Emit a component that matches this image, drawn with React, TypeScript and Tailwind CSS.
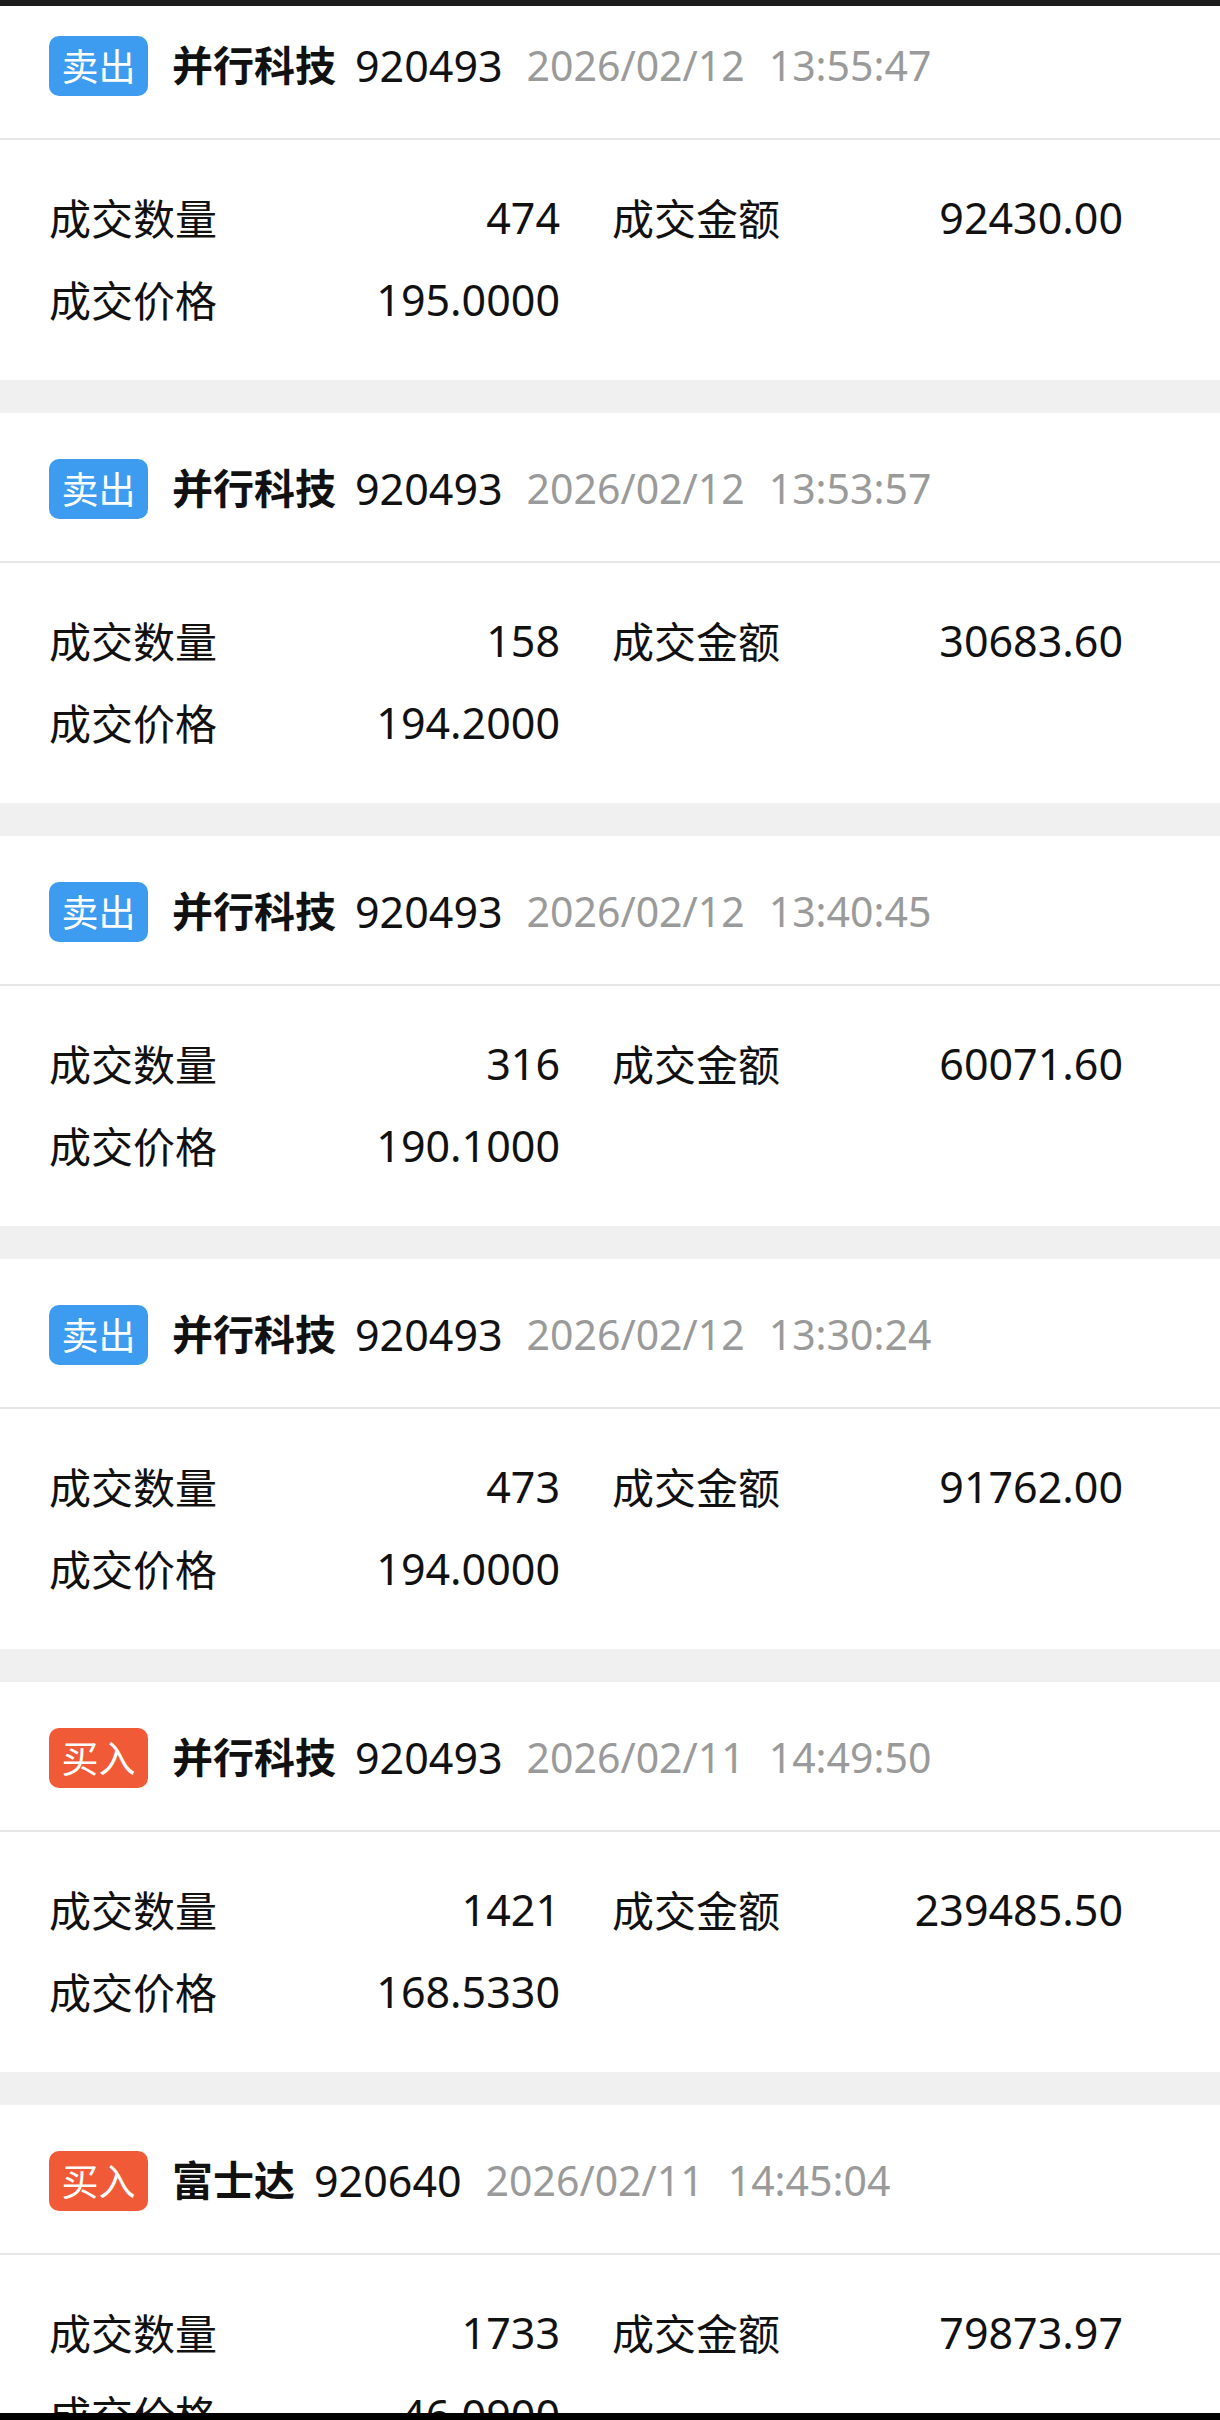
import React from "react"

type Trade = {
  side: "buy" | "sell"
  name: string
  code: string
  date: string
  time: string
  qty: string
  amount: string
  price: string
}

const trades: Trade[] = [
  { side: "sell", name: "并行科技", code: "920493", date: "2026/02/12", time: "13:55:47", qty: "474", amount: "92430.00", price: "195.0000" },
  { side: "sell", name: "并行科技", code: "920493", date: "2026/02/12", time: "13:53:57", qty: "158", amount: "30683.60", price: "194.2000" },
  { side: "sell", name: "并行科技", code: "920493", date: "2026/02/12", time: "13:40:45", qty: "316", amount: "60071.60", price: "190.1000" },
  { side: "sell", name: "并行科技", code: "920493", date: "2026/02/12", time: "13:30:24", qty: "473", amount: "91762.00", price: "194.0000" },
  { side: "buy", name: "并行科技", code: "920493", date: "2026/02/11", time: "14:49:50", qty: "1421", amount: "239485.50", price: "168.5330" },
  { side: "buy", name: "富士达", code: "920640", date: "2026/02/11", time: "14:45:04", qty: "1733", amount: "79873.97", price: "46.0900" },
]

const font = { fontFamily: '"Noto Sans", "Noto Sans CJK SC", sans-serif' }

const Cell = ({ label, value }: { label: string; value: string }) => (
  <div className="flex items-center justify-between w-[511px] h-[60px]">
    <span>{label}</span>
    <span className="text-[43px]">{value}</span>
  </div>
)

const TradeCard = ({ t }: { t: Trade }) => (
  <div className="bg-white">
    <div className="h-[150px] pt-[4px] flex items-center pl-[49px] border-b-2 border-[#e6e6e6]">
      <div
        className={
          "w-[99px] h-[60px] rounded-[10px] flex items-center justify-center text-white text-[37px] leading-none " +
          (t.side === "sell" ? "bg-[#3d9cef]" : "bg-[#f15a36]")
        }
      >
        {t.side === "sell" ? "卖出" : "买入"}
      </div>
      <span className="ml-[24px] text-[41px] font-semibold text-[#111]">{t.name}</span>
      <span className="ml-[19px] text-[43px] text-[#111]">{t.code}</span>
      <span className="ml-[24px] text-[41px] text-[#9a9a9a]">{t.date}</span>
      <span className="ml-[24px] text-[41px] text-[#9a9a9a]">{t.time}</span>
    </div>
    <div className="h-[240px] pl-[49px] pt-[48px] flex flex-col gap-[22px] text-[42px] text-[#111]">
      <div className="flex gap-[52px]">
        <Cell label="成交数量" value={t.qty} />
        <Cell label="成交金额" value={t.amount} />
      </div>
      <div className="flex">
        <Cell label="成交价格" value={t.price} />
      </div>
    </div>
    <div className="h-[33px] bg-[#f0f0f0]" />
  </div>
)

const App = () => {
  return (
    <div className="w-[1220px] h-[2420px] bg-white flex flex-col overflow-hidden" style={font}>
      <div className="h-[6px] bg-[#1c1c1c] shrink-0" />
      <div className="flex-1 overflow-hidden">
        <div className="-mt-[16px]">
          {trades.map((t, i) => (
            <TradeCard key={i} t={t} />
          ))}
        </div>
      </div>
      <div className="h-[7px] bg-black shrink-0" />
    </div>
  )
}

export default App
